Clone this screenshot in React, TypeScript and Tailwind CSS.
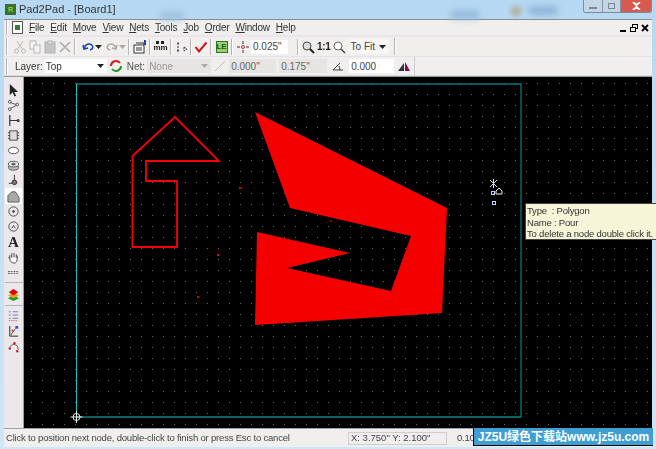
const font = { fontFamily: '"Liberation Sans", Arial, sans-serif' };

const Grip = () => (
  <div className="flex flex-col justify-center h-full mx-[2px] shrink-0">
    <div className="w-[2px] h-[17px] border-l border-[#b5b2b5] bg-white" />
  </div>
);

const Sep = () => <div className="w-[2px] h-[16px] mx-[1px] shrink-0 border-l border-[#b5b2b5] bg-white" />;

const MenuItem = ({ k, rest }: { k: string; rest: string }) => (
  <span className="text-[10px] text-[#333] leading-none tracking-[-0.2px]">
    <span className="underline">{k}</span>
    {rest}
  </span>
);

const Tool = ({ children, w = 17 }: { children: React.ReactNode; w?: number }) => (
  <div className="flex items-center justify-center h-[18px] shrink-0" style={{ width: w }}>
    {children}
  </div>
);

const Ico = ({ children, s = 14 }: { children: React.ReactNode; s?: number }) => (
  <svg width={s} height={s} viewBox="0 0 14 14" fill="none">
    {children}
  </svg>
);

const Field = ({ w, text, muted }: { w: number; text: string; muted?: boolean }) => (
  <div
    className={`flex items-center h-[14px] px-[2px] text-[10px] shrink-0 ${muted ? "bg-[#e7e5e3] text-[#666]" : "bg-white text-[#444]"}`}
    style={{ width: w }}
  >
    {text}
  </div>
);

const Caret = ({ color = "#222" }: { color?: string }) => (
  <svg width="7" height="4" viewBox="0 0 7 4" className="shrink-0">
    <path d="M0 0h7L3.5 4z" fill={color} />
  </svg>
);

const SideTile = ({ children }: { children: React.ReactNode }) => (
  <div className="flex items-center justify-center w-[18px] h-[15px] shrink-0">
    <Ico s={13}>{children}</Ico>
  </div>
);

const SideBar = () => (
  <div className="flex flex-col items-center w-[20px] shrink-0 bg-[#ebe7eb] border-r border-[#9c9a9c] pt-[6px] blur-[0.3px]">
    <SideTile><path d="M3 0v12l3-3 2 4.500 1.800-.9-2-4H12z" fill="#222" /></SideTile>
    <SideTile>
      <g stroke="#555" fill="none"><circle cx="3" cy="3" r="1.500" /><circle cx="11" cy="6" r="1.500" /><circle cx="3" cy="11" r="1.500" /><path d="M4 4l6 2M10 7l-6 3" /></g>
    </SideTile>
    <SideTile>
      <g stroke="#333" fill="none" strokeWidth="1.300"><path d="M3 1v12M3 7h8" /><circle cx="12" cy="7" r="1" /></g>
    </SideTile>
    <SideTile>
      <g stroke="#444" fill="#ddd"><rect x="3" y="2" width="8" height="10" /><path d="M1 4h2M1 7h2M1 10h2M11 4h2M11 7h2M11 10h2" /></g>
    </SideTile>
    <SideTile><ellipse cx="7" cy="7" rx="5.500" ry="3.500" fill="#fff" stroke="#444" /></SideTile>
    <SideTile>
      <g stroke="#555" fill="#bbb"><ellipse cx="7" cy="9" rx="5.500" ry="3" /><ellipse cx="7" cy="5.500" rx="5.500" ry="3" fill="#eee" /><ellipse cx="7" cy="5.500" rx="2" ry="1" fill="#555" /></g>
    </SideTile>
    <SideTile>
      <g stroke="#333" fill="#777"><path d="M8 1v6" fill="none" /><circle cx="8" cy="9" r="2.500" /><path d="M2 10h4" fill="none" /></g>
    </SideTile>
    <div className="flex items-center justify-center w-[17px] h-[16px] bg-white shrink-0">
      <Ico s={13}>
        <path d="M1 13V6l4-4h4l4 6v5z" fill="#a9a9a9" stroke="#555" />
      </Ico>
    </div>
    <SideTile>
      <g stroke="#444" fill="none"><circle cx="7" cy="7" r="5" /><circle cx="7" cy="7" r="1" fill="#444" /></g>
    </SideTile>
    <SideTile>
      <g stroke="#444" fill="none"><circle cx="7" cy="7" r="5" /><path d="M5 9l2-3 2 3" /></g>
    </SideTile>
    <div className="flex items-center justify-center h-[16px] text-[15px] font-bold leading-none text-[#222] shrink-0" style={{ fontFamily: '"Liberation Serif", serif' }}>
      A
    </div>
    <SideTile>
      <path d="M3 8V4.500M5 7V2.500M7.500 7V2M10 7.500V3.500M3 8l-1.500-1M3 8c0 3 2 5 4.500 5S11 11 11 8V5" stroke="#444" fill="#fff" />
    </SideTile>
    <SideTile><path d="M1 6h12M1 8h12" stroke="#555" strokeDasharray="2 1" /></SideTile>
    <div className="w-[18px] h-[4px] mt-[2px] border-t border-[#b5b2b5] shrink-0" />
    <div className="flex items-center justify-center w-[18px] h-[17px] shrink-0">
      <Ico s={13}>
        <path d="M7 8l6 3-6 3-6-3z" fill="#1a9a2a" />
        <path d="M7 5l6 3-6 3-6-3z" fill="#e8a020" />
        <path d="M7 1l5 3.500-5 3.500-5-3.500z" fill="#e00000" />
      </Ico>
    </div>
    <div className="w-[18px] h-[3px] border-b border-[#b5b2b5] shrink-0" />
    <div className="flex flex-col items-center pt-[2px] gap-[1px]">
      <SideTile>
        <path d="M2 3h2M6 3h6M2 6.500h2M6 6.500h6M2 10h2M6 10h6" stroke="#6677aa" />
        <path d="M2 12.500h10" stroke="#cc4444" strokeDasharray="1 1" />
      </SideTile>
      <SideTile>
        <path d="M3 1v11h9" stroke="#222" />
        <path d="M4 11l5-7" stroke="#444" />
        <rect x="9" y="1" width="3" height="3" fill="#3355cc" />
        <rect x="5" y="5" width="2" height="2" fill="#cc3333" />
      </SideTile>
      <SideTile>
        <path d="M3 8a4.500 4.500 0 1 1 8 3" stroke="#555" />
        <circle cx="3" cy="8" r="1.300" fill="#cc2222" />
        <circle cx="8" cy="2.500" r="1.300" fill="#cc2222" />
        <circle cx="11" cy="11" r="1.300" fill="#cc2222" />
      </SideTile>
    </div>
  </div>
);

const Canvas = () => (
  <div className="flex-1 bg-black">
    <svg className="block" width="628" height="351" viewBox="24 77 628 351">
      <defs>
        <pattern id="g" x="31" y="83" width="11" height="11" patternUnits="userSpaceOnUse">
          <rect width="1" height="1" fill="#68686f" />
        </pattern>
      </defs>
      <rect x="24" y="77" width="628" height="351" fill="url(#g)" />
      <path d="M76 84H521V417" fill="none" stroke="#0c7478" strokeWidth="1.300" />
      <path d="M76.500 84V417H521" fill="none" stroke="#10c4c4" />
      <path d="M132.500 156L175 117L219 161H146V181H177V247H132.500Z" fill="none" stroke="#f80000" strokeWidth="1.800" />
      <path d="M255 112L447 208L442 313L255 325L257 232L350 253L287 268L391 291L411 236L290 208Z" fill="#f40000" />
      <rect x="239" y="187" width="2" height="2" fill="#e00000" />
      <rect x="217" y="254" width="2" height="2" fill="#e00000" />
      <rect x="197" y="296" width="2" height="2" fill="#d00000" />
      <rect x="330" y="220" width="2" height="2" fill="#900000" />
      {/* origin marker */}
      <g stroke="#e8e8e8" fill="none">
        <circle cx="76.500" cy="417" r="3.500" />
        <path d="M76.500 411v12M70.500 417h12" />
      </g>
      {/* cursor */}
      <g fill="none">
        <path d="M490 180l7 7M497 180l-7 7M493.500 179v9" stroke="#dcdcf4" />
        <rect x="491.500" y="191.500" width="3" height="3" stroke="#c8d0ff" />
        <rect x="492.500" y="201.500" width="3" height="3" stroke="#c8d0ff" />
        <path d="M496 194v-3l3-3 3 3v3z" stroke="#f0f0f0" />
      </g>
    </svg>
  </div>
);

export default function App() {
  return (
    <div
      className="relative w-[656px] h-[449px] overflow-hidden flex flex-col bg-gradient-to-b from-[#b6d8f2] to-[#cfe6f6]"
      style={font}
    >
      {/* title bar */}
      <div className="relative flex items-center h-[19px] shrink-0 pl-[5px]">
        <div className="absolute left-[160px] top-[12px] w-[24px] h-[8px] rounded-full bg-[#9dbfdc] blur-[3px]" />
        <div className="absolute left-[450px] top-[10px] w-[30px] h-[9px] rounded-full bg-[#97bbdc] blur-[3px]" />
        <div className="absolute left-[510px] top-[5px] w-[12px] h-[12px] rounded-full bg-[#b4b8b0] blur-[2px]" />
        <div className="absolute left-[528px] top-[6px] w-[30px] h-[9px] rounded-full bg-[#8fb5d8] blur-[3px]" />
        <div className="relative flex items-center justify-center w-[11px] h-[11px] bg-[#2d7a2d] border border-[#555] text-[7px] text-[#e8d840] leading-none">
          R
        </div>
        <span className="relative ml-[3px] text-[11px] text-[#333] blur-[0.3px]">Pad2Pad - [Board1]</span>
        <div className="relative ml-auto flex h-[13px] mr-[4px] self-start border border-t-0 border-[#7e8a98] rounded-b-[3px] overflow-hidden">
          <div className="flex items-center justify-center w-[19px] bg-[#c4d6e6] border-r border-[#8896a4]">
            <div className="w-[8px] h-[2px] mt-[3px] bg-[#7a8796]" />
          </div>
          <div className="flex items-center justify-center w-[18px] bg-[#c4d6e6] border-r border-[#8896a4]">
            <div className="w-[7px] h-[6px] border border-[#7a8796]" />
          </div>
          <div className="flex items-center justify-center w-[30px] bg-[#d65a50]">
            <svg width="9" height="8" viewBox="0 0 9 8">
              <path d="M1 0l3.500 3L8 0M1 8l3.500-3L8 8" stroke="#fff" strokeWidth="1.800" fill="none" />
            </svg>
          </div>
        </div>
      </div>

      {/* window */}
      <div className="flex-1 flex flex-col min-h-0 ml-[4px] mr-[4px] bg-[#f0efee] border-t border-[#8c8c8c]">
        {/* menu bar */}
        <div className="flex items-center h-[17px] shrink-0 border-b-2 border-[#ece3ec] blur-[0.3px]">
          <Grip />
          <div className="flex items-center justify-center w-[11px] h-[13px] bg-white border border-[#555] ml-[2px] mr-[6px]">
            <div className="w-[5px] h-[5px] bg-[#3a7a3a]" />
          </div>
          <div className="flex items-center gap-[6px]">
            <MenuItem k="F" rest="ile" />
            <MenuItem k="E" rest="dit" />
            <MenuItem k="M" rest="ove" />
            <MenuItem k="V" rest="iew" />
            <MenuItem k="N" rest="ets" />
            <MenuItem k="T" rest="ools" />
            <MenuItem k="J" rest="ob" />
            <MenuItem k="O" rest="rder" />
            <MenuItem k="W" rest="indow" />
            <MenuItem k="H" rest="elp" />
          </div>
          <div className="ml-auto flex items-center gap-[1px] mr-[2px]">
            <div className="flex items-end justify-center w-[10px] h-[10px] pb-[1px]">
              <div className="w-[6px] h-[2px] bg-black" />
            </div>
            <div className="relative w-[10px] h-[10px]">
              <div className="absolute right-[1px] top-[1px] w-[6px] h-[5px] border border-black" />
              <div className="absolute left-[1px] bottom-[1px] w-[6px] h-[5px] border border-black bg-[#f0efee]" />
            </div>
            <div className="flex items-center justify-center w-[10px] h-[10px]">
              <svg width="8" height="8" viewBox="0 0 8 8">
                <path d="M1 1l6 6M7 1L1 7" stroke="#000" strokeWidth="1.800" />
              </svg>
            </div>
          </div>
        </div>

        {/* toolbar 1 */}
        <div className="flex items-center h-[20px] shrink-0 border-b border-[#e6e1e6] blur-[0.3px]">
          <Grip />
          <div className="flex items-center w-[60px] opacity-35 ml-[2px]">
            <Tool w={15}><Ico><path d="M4 1l6 9M10 1L4 10" stroke="#555" /><circle cx="3.500" cy="11" r="2" stroke="#555" /><circle cx="10.500" cy="11" r="2" stroke="#555" /></Ico></Tool>
            <Tool w={15}><Ico><rect x="2" y="1" width="6" height="8" stroke="#555" fill="#fff" /><rect x="6" y="5" width="6" height="8" stroke="#555" fill="#fff" /></Ico></Tool>
            <Tool w={15}><Ico><rect x="2" y="2" width="10" height="11" fill="#777" stroke="#444" /><rect x="5" y="1" width="4" height="3" fill="#ddd" stroke="#444" /></Ico></Tool>
            <Tool w={15}><Ico><path d="M2 2l10 10M12 2L2 12" stroke="#333" strokeWidth="1.600" /></Ico></Tool>
          </div>
          <Grip />
          <div className="flex items-center ml-[3px]">
            <Tool w={14}><Ico><path d="M4 8a4 3 0 1 1 5 2" stroke="#1a3fa8" strokeWidth="1.500" /><path d="M2 5l1 4 4-1" stroke="#1a3fa8" strokeWidth="1.500" /></Ico></Tool>
            <Caret />
            <div className="w-[3px]" />
            <Tool w={14}><Ico><path d="M10 8a4 3 0 1 0-5 2" stroke="#aaa" strokeWidth="1.500" /><path d="M12 5l-1 4-4-1" stroke="#aaa" strokeWidth="1.500" /></Ico></Tool>
            <Caret color="#aaa" />
          </div>
          <div className="w-[1px] shrink-0" />
          <Sep />
          <Tool><Ico><rect x="1" y="5" width="10" height="8" stroke="#333" fill="#fff" /><path d="M3 3h8v2M3 8h6M3 10h6" stroke="#333" /><rect x="11" y="0" width="2" height="5" fill="#2244aa" /></Ico></Tool>
          <Sep />
          <Tool>
            <div className="flex flex-col items-center">
              <div className="flex gap-[2px]">
                <div className="w-[3px] h-[3px] bg-[#222]" />
                <div className="w-[3px] h-[3px] bg-[#222]" />
              </div>
              <span className="text-[8px] font-bold leading-[8px] text-[#222]">mm</span>
            </div>
          </Tool>
          <Sep />
          <Tool w={16}><Ico><path d="M3 3h3M3 11h3M4 3v8M10 7l3 2-3 2z" stroke="#333" strokeDasharray="2 1" /></Ico></Tool>
          <Sep />
          <Tool w={16}><Ico><path d="M1.500 7l3.500 4.500L12.500 2.500" stroke="#d01010" strokeWidth="2" /></Ico></Tool>
          <Sep />
          <Tool>
            <div className="flex items-center justify-center w-[12px] h-[12px] bg-[#9fd070] border border-[#2a7a2a] text-[8px] font-bold leading-none text-[#1a5a1a]">LE</div>
          </Tool>
          <Sep />
          <Tool><Ico><path d="M7 1v3M7 10v3M1 7h3M10 7h3" stroke="#333" /><circle cx="7" cy="7" r="1.500" stroke="#b03030" /></Ico></Tool>
          <div className="mr-[8px]"><Field w={37} text={'0.025"'} /></div>
          <Sep />
          <Tool w={16}><Ico><circle cx="6" cy="6" r="4" stroke="#444" fill="#ddd" /><path d="M9 9l4 4" stroke="#222" strokeWidth="2" /></Ico></Tool>
          <span className="text-[10px] font-bold text-[#222] mx-[1px] tracking-[-0.3px]">1:1</span>
          <Tool w={14}><Ico><circle cx="6" cy="6" r="4" stroke="#666" fill="#fff" /><path d="M9 9l4 4" stroke="#444" strokeWidth="1.500" /></Ico></Tool>
          <div className="flex items-center h-[15px] w-[40px] shrink-0 bg-[#f7f6f5] ml-[3px] pl-[2px] text-[10px] text-[#444]">
            To Fit
            <span className="ml-auto mr-[3px]"><Caret /></span>
          </div>
          <div className="ml-[3px]"><Grip /></div>
        </div>

        {/* toolbar 2 */}
        <div className="flex items-center h-[19px] shrink-0 border-b border-[#dedade] blur-[0.3px]">
          <Grip />
          <span className="ml-[5px] mr-[1px] text-[10px] text-[#333]">Layer:</span>
          <div className="flex items-center w-[63px] h-[14px] bg-white pl-[2px] text-[10px] text-[#333]">
            Top
            <span className="ml-auto mr-[3px]"><Caret /></span>
          </div>
          <Tool w={18}>
            <Ico>
              <path d="M2 7a5 5 0 0 1 9-3" stroke="#d02020" strokeWidth="2" />
              <path d="M12 7a5 5 0 0 1-9 3" stroke="#1f9a2a" strokeWidth="2" />
            </Ico>
          </Tool>
          <span className="ml-[2px] mr-[2px] text-[10px] text-[#555]">Net:</span>
          <div className="flex items-center w-[64px] h-[14px] bg-[#e7e5e3] pl-[2px] text-[10px] text-[#999]">
            None
            <span className="ml-auto mr-[3px]"><Caret color="#aaa" /></span>
          </div>
          <Tool w={18}><Ico><path d="M2 12L12 2" stroke="#bbb" /></Ico></Tool>
          <Field w={47} text={'0.000"'} muted />
          <div className="w-[3px] shrink-0" />
          <Field w={48} text={'0.175"'} muted />
          <Tool w={22}><Ico><path d="M2 11h10M2 11l7-7M8 7l1 4" stroke="#444" /></Ico></Tool>
          <Field w={45} text="0.000" />
          <Tool w={20}><Ico><path d="M1 12l6-8v8z" fill="#334" /><path d="M8 3l5 9H8z" fill="#801050" /></Ico></Tool>
          <div className="w-[1px] h-full bg-[#cfcccf]" />
        </div>

        {/* main area */}
        <div className="flex flex-1 min-h-0 border-t border-[#9a9a9a]">
          <SideBar />
          <Canvas />
        </div>

        {/* status bar */}
        <div className="flex items-center h-[19px] shrink-0 text-[9.500px] text-[#444] bg-[#f0efee] border-t border-[#a0a0a0] blur-[0.3px]">
          <span className="ml-[2px] w-[342px] shrink-0 tracking-[-0.19px] whitespace-nowrap">Click to position next node, double-click to finish or press Esc to cancel</span>
          <div className="flex items-center h-[13px] w-[99px] shrink-0 border border-[#d0ccd0] pl-[2px]">X: 3.750" Y: 2.100"</div>
          <span className="ml-[10px] tracking-[-0.2px]">0.10</span>
        </div>
      </div>

      <div className="h-[2px] shrink-0" />

      {/* hover tooltip */}
      <div className="absolute left-[525px] top-[203px] w-[131px] h-[37px] bg-[#f6f5d8] border border-[#444] border-r-0 pl-[1px] pt-[1px] text-[9.500px] leading-[11.500px] text-[#333] whitespace-nowrap tracking-[-0.2px] blur-[0.2px]">
        <div>Type&nbsp; : Polygon</div>
        <div>Name : Pour</div>
        <div>To delete a node double click it.</div>
      </div>

      {/* watermark */}
      <div className="absolute left-[473px] top-[428px] w-[180px] h-[18px] flex items-center justify-center bg-[#3f9fd2] border-l border-b border-black text-white font-bold text-[12px] leading-none whitespace-nowrap" style={{ fontFamily: '"Liberation Sans", "Noto Sans CJK SC", sans-serif' }}>
        JZ5U绿色下载站www.jz5u.com
      </div>
    </div>
  );
}
